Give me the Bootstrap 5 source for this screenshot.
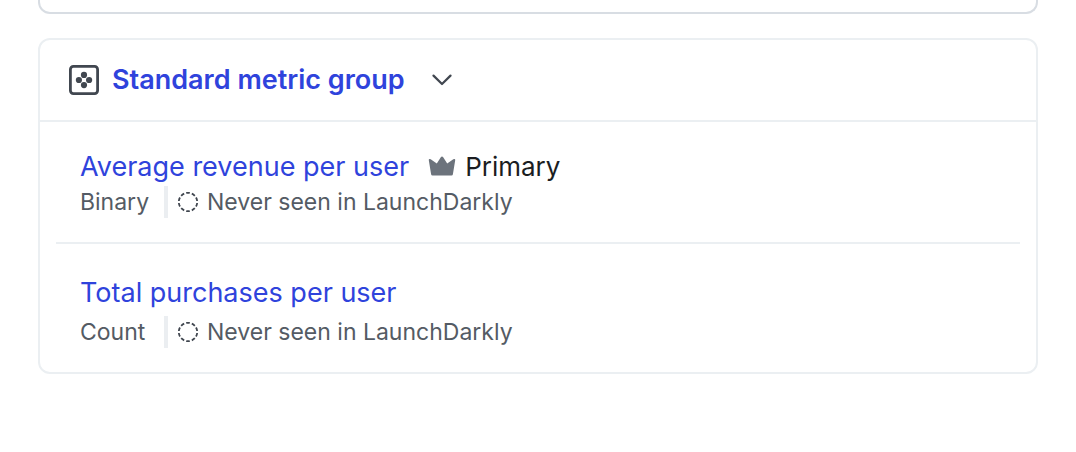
<!DOCTYPE html>
<html lang="en">
<head>
<meta charset="utf-8">
<meta name="viewport" content="width=device-width, initial-scale=1">
<title>Metrics</title>
<link href="https://cdn.jsdelivr.net/npm/bootstrap@5.3.0/dist/css/bootstrap.min.css" rel="stylesheet">
<style>
  body { font-family: Inter, "Liberation Sans", sans-serif; color: #1b1d22; background: #fff; }
  a { color: #2f43dc; text-decoration: none; }
  a:hover { text-decoration: underline; }
  .page { padding: 0 38px 24px; }
  .prev-panel { height: 14px; border: 2px solid #d8dde3; border-top: 0; border-radius: 0 0 12px 12px; margin-bottom: 24px; }
  .group-card { border: 2px solid #ebeff2; border-radius: 12px; }
  .group-head { padding: 24px 28px; border-bottom: 2px solid #ebeff2; }
  .group-title { font-size: 27px; line-height: 32px; font-weight: 600; margin: 0 27px 0 12px; }
  .toggle-btn { color: #414750; line-height: 0; }
  .metrics { padding: 0 16px; }
  .metric-row { padding: 28px 24px 24px; }
  .metric-row + .metric-row { border-top: 2px solid #ebeff2; padding-top: 32px; }
  .metric-row + .metric-row .metric-meta { margin-top: 6px; }
  .metric-name { font-size: 27px; line-height: 34px; }
  .primary-tag { font-size: 26px; gap: 9px; margin-left: 19px; }
  .metric-meta { font-size: 23px; line-height: 32px; color: #545b64; margin-top: 2px; }
  .metric-type { width: 84px; }
  .status { border-left: 4px solid #ebeef1; padding-left: 9px; gap: 8px; }
</style>
</head>
<body>
<svg class="d-none" aria-hidden="true">
  <symbol id="never-seen" viewBox="0 0 22 22">
    <circle cx="11" cy="11" r="9.200" fill="none" stroke="#414750" stroke-width="1.800" pathLength="100" stroke-dasharray="6.400 3.600" stroke-dashoffset="-1.800"/>
  </symbol>
</svg>
<main class="page">
  <div class="prev-panel"></div>
  <section class="group-card">
    <header class="group-head d-flex align-items-center">
      <svg width="32" height="32" viewBox="0 0 32 32" aria-hidden="true">
        <rect x="2.400" y="2.400" width="27.200" height="27.200" rx="3" fill="none" stroke="#414750" stroke-width="2.800"/>
        <g fill="#414750"><circle cx="16" cy="10.900" r="3.100"/><circle cx="10.900" cy="16" r="3.100"/><circle cx="21.100" cy="16" r="3.100"/><circle cx="16" cy="21.100" r="3.100"/></g>
      </svg>
      <h2 class="group-title"><a href="#">Standard metric group</a></h2>
      <button type="button" class="btn toggle-btn border-0 p-0" aria-label="Toggle metric group" data-bs-toggle="collapse" data-bs-target="#metrics" aria-expanded="true">
        <svg width="20" height="20" viewBox="0 0 20 20" fill="none" stroke="currentColor" stroke-width="2.2" stroke-linecap="round" stroke-linejoin="round" aria-hidden="true"><path d="M1.500 5.600 10 14l8.500-8.400"/></svg>
      </button>
    </header>
    <div id="metrics" class="metrics collapse show">
      <div class="metric-row">
        <div class="metric-name d-flex align-items-center">
          <a href="#">Average revenue per user</a>
          <span class="primary-tag d-flex align-items-center">
            <svg width="28" height="22" viewBox="0 0 28 22" fill="#6c737c" aria-hidden="true"><path d="M14 .4Q14.700 .4 15.200 1.300L19.200 7.600 25.300 3.200Q27.500 2.300 27.200 4.300L24.900 18.200Q24.700 19.400 23.500 19.400H4.500Q3.300 19.400 3.100 18.200L.8 4.300Q.5 2.300 2.700 3.200L8.800 7.600 12.800 1.300Q13.300 .4 14 .4Z"/></svg>
            Primary
          </span>
        </div>
        <div class="metric-meta d-flex">
          <span class="metric-type">Binary</span>
          <span class="status d-flex align-items-center"><svg width="22" height="22" aria-hidden="true"><use href="#never-seen"/></svg>Never seen in LaunchDarkly</span>
        </div>
      </div>
      <div class="metric-row">
        <div class="metric-name"><a href="#">Total purchases per user</a></div>
        <div class="metric-meta d-flex">
          <span class="metric-type">Count</span>
          <span class="status d-flex align-items-center"><svg width="22" height="22" aria-hidden="true"><use href="#never-seen"/></svg>Never seen in LaunchDarkly</span>
        </div>
      </div>
    </div>
  </section>
</main>
<script src="https://cdn.jsdelivr.net/npm/bootstrap@5.3.0/dist/js/bootstrap.bundle.min.js"></script>
</body>
</html>
